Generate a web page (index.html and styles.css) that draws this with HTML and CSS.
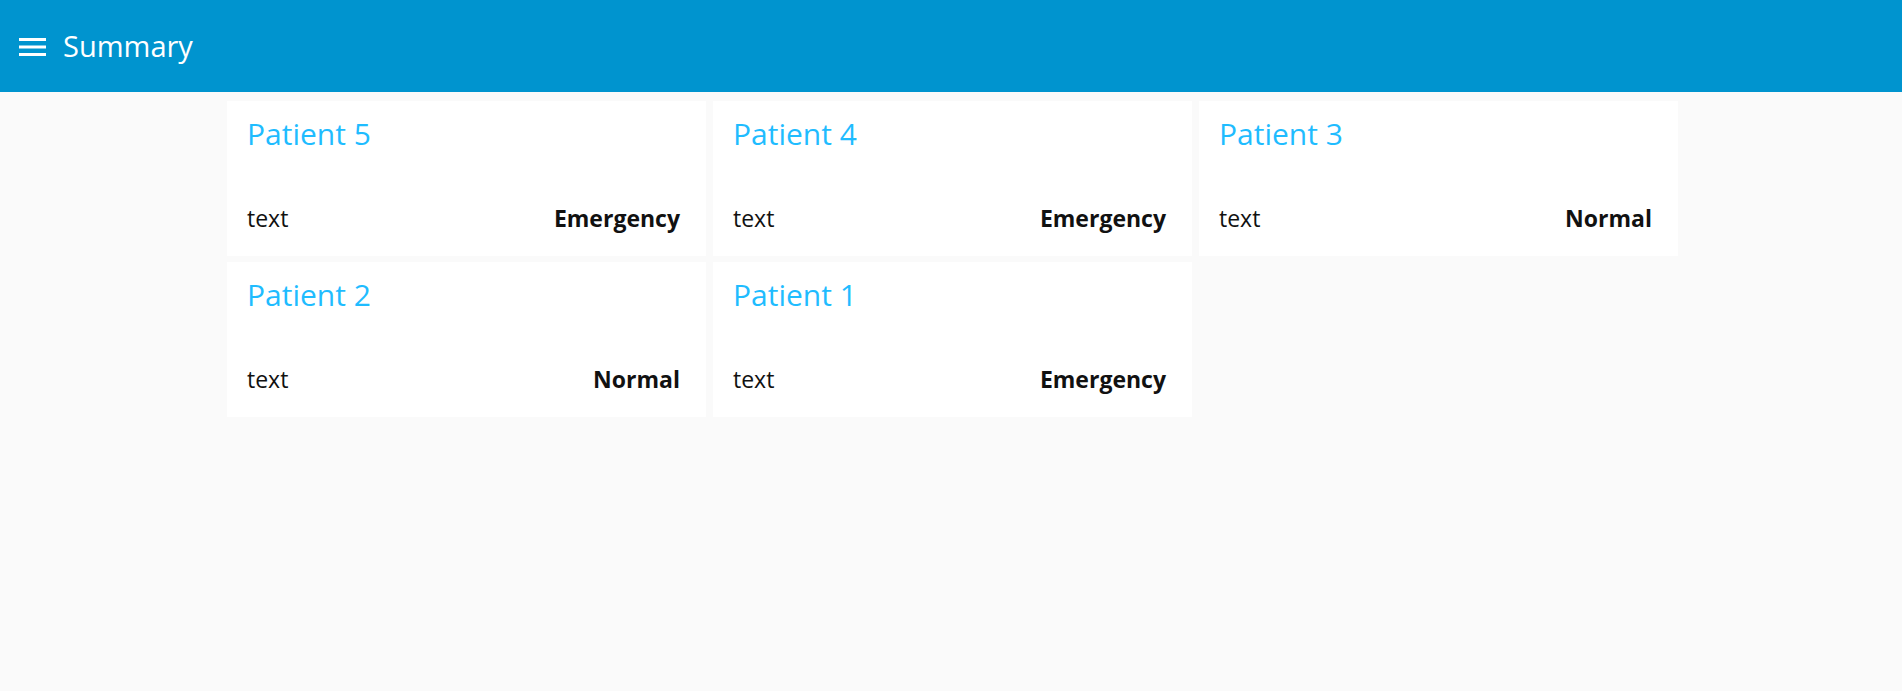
FILE: index.html
```html
<!DOCTYPE html>
<html lang="en">
<head>
<meta charset="utf-8">
<title>Summary</title>
<link rel="stylesheet" href="styles.css">
</head>
<body>
<header class="topbar">
  <button class="menu-btn" aria-label="Menu">
    <svg width="27" height="18" viewBox="0 0 27 18"><rect x="0" y="0" width="27" height="3" fill="#fff"/><rect x="0" y="7.5" width="27" height="3" fill="#fff"/><rect x="0" y="15" width="27" height="3" fill="#fff"/></svg>
  </button>
  <h1 class="topbar-title">Summary</h1>
</header>
<main class="wrap">
  <div class="grid">
    <div class="card"><div class="card-title">Patient 5</div><div class="card-row"><span class="card-text">text</span><span class="card-status">Emergency</span></div></div>
    <div class="card"><div class="card-title">Patient 4</div><div class="card-row"><span class="card-text">text</span><span class="card-status">Emergency</span></div></div>
    <div class="card"><div class="card-title">Patient 3</div><div class="card-row"><span class="card-text">text</span><span class="card-status">Normal</span></div></div>
    <div class="card"><div class="card-title">Patient 2</div><div class="card-row"><span class="card-text">text</span><span class="card-status">Normal</span></div></div>
    <div class="card"><div class="card-title">Patient 1</div><div class="card-row"><span class="card-text">text</span><span class="card-status">Emergency</span></div></div>
  </div>
</main>
</body>
</html>
```
FILE: styles.css
```css
html, body {
  margin: 0;
  padding: 0;
  background: #fafafa;
  font-family: "Open Sans", "Noto Sans", sans-serif;
  color: #111;
}
.topbar {
  height: 92px;
  background: #0094cf;
  display: flex;
  align-items: center;
  padding-left: 19px;
  box-sizing: border-box;
}
.menu-btn {
  background: none;
  border: 0;
  padding: 0;
  margin: 0 17px 0 0;
  display: flex;
  cursor: pointer;
  position: relative;
  top: 1px;
}
.topbar-title {
  margin: 0;
  color: #fff;
  font-weight: 500;
  font-size: 29px;
  line-height: 36px;
}
.wrap {
  padding-top: 9px;
  display: flex;
  justify-content: center;
}
.grid {
  display: grid;
  grid-template-columns: repeat(3, 479px);
  column-gap: 7px;
  row-gap: 6px;
  padding-left: 3px;
}
.card {
  background: #fff;
  height: 155px;
  box-sizing: border-box;
  padding: 15px 26px 24px 20px;
  display: flex;
  flex-direction: column;
}
.card-title {
  color: #1fbcff;
  font-size: 30px;
  font-weight: 500;
  line-height: 36px;
}
.card-row {
  margin-top: auto;
  display: flex;
  justify-content: space-between;
  font-size: 23px;
  line-height: 28px;
}
.card-status {
  font-weight: 700;
}
```
